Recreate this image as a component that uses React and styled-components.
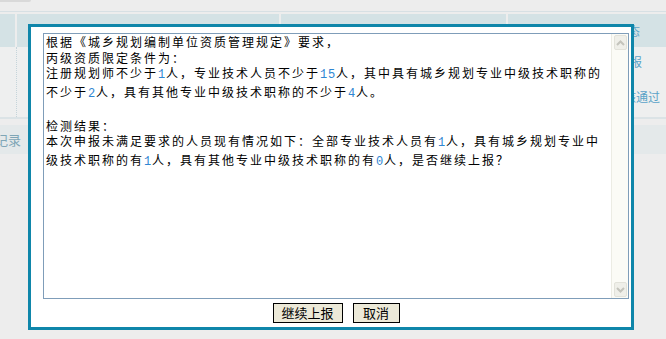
import React from 'react'
import styled, {createGlobalStyle} from 'styled-components'

const GlobalStyle = createGlobalStyle`
  html, body {
    margin: 0;
    padding: 0;
    background: #ededed;
    font-family: "Noto Sans CJK SC", "Liberation Sans", sans-serif;
  }
`

export default function App() {
  return (
    <Page>
      <GlobalStyle />
      <TopBar>
        <Tab />
      </TopBar>
      <Table>
        <HeadCell />
        <HeadCell />
        <HeadCell />
        <HeadCell indent={84}>审核状态</HeadCell>
        <BodyCell dotted />
        <BodyCell />
        <BodyCell />
        <BodyCell>
          <StatusLink indent={98}>已上报</StatusLink>
          <StatusLink indent={104}>审核通过</StatusLink>
        </BodyCell>
      </Table>
      <FooterRow>
        <FooterLink>记录</FooterLink>
      </FooterRow>

      <Dialog>
        <Memo>
          <MemoText>
            <Line>根据《城乡规划编制单位资质管理规定》要求，</Line>
            <Line>丙级资质限定条件为：</Line>
            <Line>
              注册规划师不少于<Digit>1</Digit>人，专业技术人员不少于<Digit>1</Digit>
              <Digit>5</Digit>人，其中具有城乡规划专业中级技术职称的不少于
              <Digit>2</Digit>人，具有其他专业中级技术职称的不少于<Digit>4</Digit>人。
            </Line>
            <Line />
            <Line>检测结果：</Line>
            <Line>
              本次申报未满足要求的人员现有情况如下：全部专业技术人员有<Digit>1</Digit>
              人，具有城乡规划专业中级技术职称的有<Digit>1</Digit>人，具有其他专业中级技术职称的有
              <Digit>0</Digit>人，是否继续上报？
            </Line>
          </MemoText>
          <ScrollBar>
            <ArrowButton>
              <svg width="9" height="6" viewBox="0 0 9 6">
                <path d="M1 5 L4.5 1.5 L8 5" fill="none" stroke="#c4c4bc" strokeWidth="2" />
              </svg>
            </ArrowButton>
            <Track />
            <ArrowButton>
              <svg width="9" height="6" viewBox="0 0 9 6">
                <path d="M1 1 L4.5 4.5 L8 1" fill="none" stroke="#c4c4bc" strokeWidth="2" />
              </svg>
            </ArrowButton>
          </ScrollBar>
        </Memo>
        <ButtonRow>
          <Button width={70}>继续上报</Button>
          <Button width={47}>取消</Button>
        </ButtonRow>
      </Dialog>
    </Page>
  )
}

const Page = styled.div`
  position: relative;
  width: 666px;
  height: 339px;
  overflow: hidden;
  background: #ededed;
`

const TopBar = styled.div`
  height: 11px;
  border-bottom: 1px solid #d7e0e4;
  margin-bottom: 2px;
`

const Tab = styled.div`
  width: 31px;
  height: 2px;
  background: #d9d9d9;
  border-bottom-right-radius: 2px;
`

const Table = styled.div`
  display: grid;
  grid-template-columns: 15px 262px 225px 1fr;
  grid-template-rows: 33px 70px;
  column-gap: 2px;
  border-bottom: 2px solid #dbe3e6;
`

const HeadCell = styled.div`
  background: #d4e2e5;
  display: flex;
  align-items: center;
  padding-left: ${props => props.indent || 0}px;
  font-size: 12px;
  color: #5ea5c8;
  white-space: nowrap;
`

const BodyCell = styled.div`
  background: #eeefef;
  display: flex;
  flex-direction: column;
  gap: 23px;
  padding-top: 9px;
  margin-right: ${props => (props.dotted ? '-2px' : '0')};
  border-right: ${props => (props.dotted ? '1px dotted #c5d4da' : 'none')};
`

const StatusLink = styled.div`
  padding-left: ${props => props.indent}px;
  font-size: 12px;
  line-height: 12px;
  color: #5aa3c8;
  white-space: nowrap;
`

const FooterRow = styled.div`
  margin-top: 6px;
  height: 29px;
  background: #e4e9ea;
  display: flex;
  align-items: center;
`

const FooterLink = styled.div`
  text-indent: -5px;
  font-size: 13px;
  color: #7fa6b6;
`

const Dialog = styled.div`
  position: absolute;
  left: 28px;
  top: 24px;
  width: 606px;
  height: 306px;
  box-sizing: border-box;
  border: 3px solid #0f86aa;
  background: #fff;
  padding: 6px 2px 0 12px;
  display: flex;
  flex-direction: column;
`

const Memo = styled.div`
  height: 266px;
  box-sizing: border-box;
  border: 1px solid #7f9db9;
  display: flex;
  background: #fff;
`

const MemoText = styled.div`
  flex: 1;
  padding: 0 2px;
  font-size: 12px;
  line-height: 15.5px;
  letter-spacing: 2px;
  color: #000;
  overflow: hidden;
`

const Line = styled.div`
  min-height: 15.5px;
`

const Digit = styled.span`
  display: inline-block;
  width: 6px;
  margin-right: 2px;
  letter-spacing: 0;
  text-align: center;
  font-family: "Liberation Mono", monospace;
  font-size: 12px;
  color: #2f86d2;
`

const ScrollBar = styled.div`
  width: 17px;
  box-sizing: border-box;
  border-left: 1px solid #ecece4;
  background: #fbfbf6;
  display: flex;
  flex-direction: column;
  align-items: center;
  padding: 1px 0;
`

const ArrowButton = styled.div`
  width: 13px;
  height: 15px;
  box-sizing: border-box;
  border: 1px solid #e2e2da;
  border-radius: 2px;
  background: #efefe9;
  display: flex;
  align-items: center;
  justify-content: center;
`

const Track = styled.div`
  flex: 1;
`

const ButtonRow = styled.div`
  display: flex;
  justify-content: center;
  gap: 10px;
  margin-top: 4px;
`

const Button = styled.button`
  width: ${props => props.width}px;
  height: 20px;
  padding: 0;
  border: 1px solid #000;
  background: #ece9d8;
  font-family: "Noto Sans CJK SC", sans-serif;
  font-size: 13px;
  line-height: 18px;
  color: #000;
`
